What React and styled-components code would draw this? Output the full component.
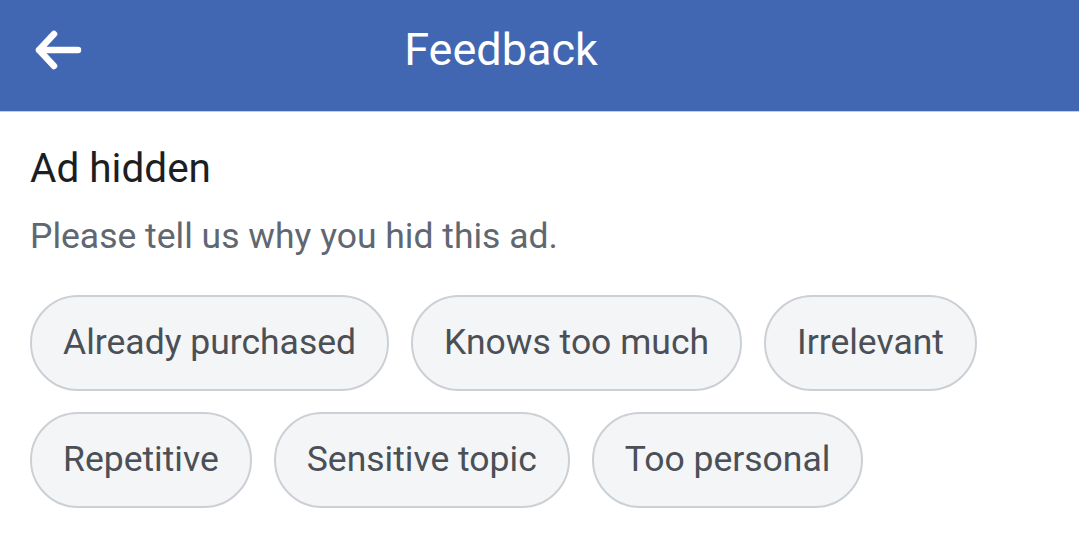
import React from "react";
import styled, { createGlobalStyle } from "styled-components";

const GlobalStyle = createGlobalStyle`
    html, body {
        margin: 0;
        padding: 0;
        background: #ffffff;
    }
    body {
        font-family: Roboto, "Liberation Sans", Arial, sans-serif;
    }
`;

const Page = styled.div`
    display: flex;
    flex-direction: column;
    width: 1079px;
    min-height: 556px;
    background: #ffffff;
`;

const Header = styled.header`
    display: grid;
    grid-template-columns: 118px 1fr 195px;
    align-items: center;
    height: 112px;
    box-sizing: border-box;
    padding-bottom: 12px;
    background-color: #4267b2;
    border-bottom: 1px solid #c9ccd3;
`;

const BackButton = styled.button`
    display: flex;
    align-items: center;
    justify-content: center;
    width: 50px;
    height: 44px;
    margin-left: 34px;
    padding: 0;
    border: none;
    background: transparent;
    cursor: pointer;
`;

const Title = styled.h1`
    margin: 0;
    text-align: center;
    color: #ffffff;
    font-size: 45px;
    font-weight: 400;
    line-height: 44px;
`;

const Content = styled.main`
    display: flex;
    flex-direction: column;
    padding: 32px 30px 0 30px;
`;

const Heading = styled.h2`
    margin: 0;
    color: #1c1e21;
    font-size: 40.5px;
    font-weight: 400;
    line-height: 48px;
`;

const Prompt = styled.p`
    margin: 23px 0 0 0;
    color: #606770;
    font-size: 35.5px;
    line-height: 42px;
`;

const ChipList = styled.div`
    display: flex;
    flex-wrap: wrap;
    gap: 21px 22px;
    margin-top: 38px;
    max-width: 980px;
`;

const Chip = styled.button`
    box-sizing: border-box;
    height: 96px;
    padding: 24px 31px 26px;
    border: 2px solid #ccd0d5;
    border-radius: 48px;
    background-color: #f4f5f7;
    color: #4b4f56;
    font-family: Roboto, "Liberation Sans", Arial, sans-serif;
    font-size: 35.5px;
    line-height: 41px;
    white-space: nowrap;
    cursor: pointer;
`;

const reasons = [
    "Already purchased",
    "Knows too much",
    "Irrelevant",
    "Repetitive",
    "Sensitive topic",
    "Too personal",
];

const BackArrow = () => (
    <svg width="50" height="44" viewBox="0 0 50 44" fill="none">
        <path
            d="M5 22 H44 M20 6 L5 22 L20 38"
            stroke="#ffffff"
            strokeWidth="6.5"
            strokeLinecap="round"
            strokeLinejoin="round"
        />
    </svg>
);

const App = () => {
    return (
        <Page>
            <GlobalStyle />
            <Header>
                <BackButton aria-label="Back">
                    <BackArrow />
                </BackButton>
                <Title>Feedback</Title>
                <span />
            </Header>
            <Content>
                <Heading>Ad hidden</Heading>
                <Prompt>Please tell us why you hid this ad.</Prompt>
                <ChipList>
                    {reasons.map((reason) => (
                        <Chip key={reason}>{reason}</Chip>
                    ))}
                </ChipList>
            </Content>
        </Page>
    );
};

export default App;
